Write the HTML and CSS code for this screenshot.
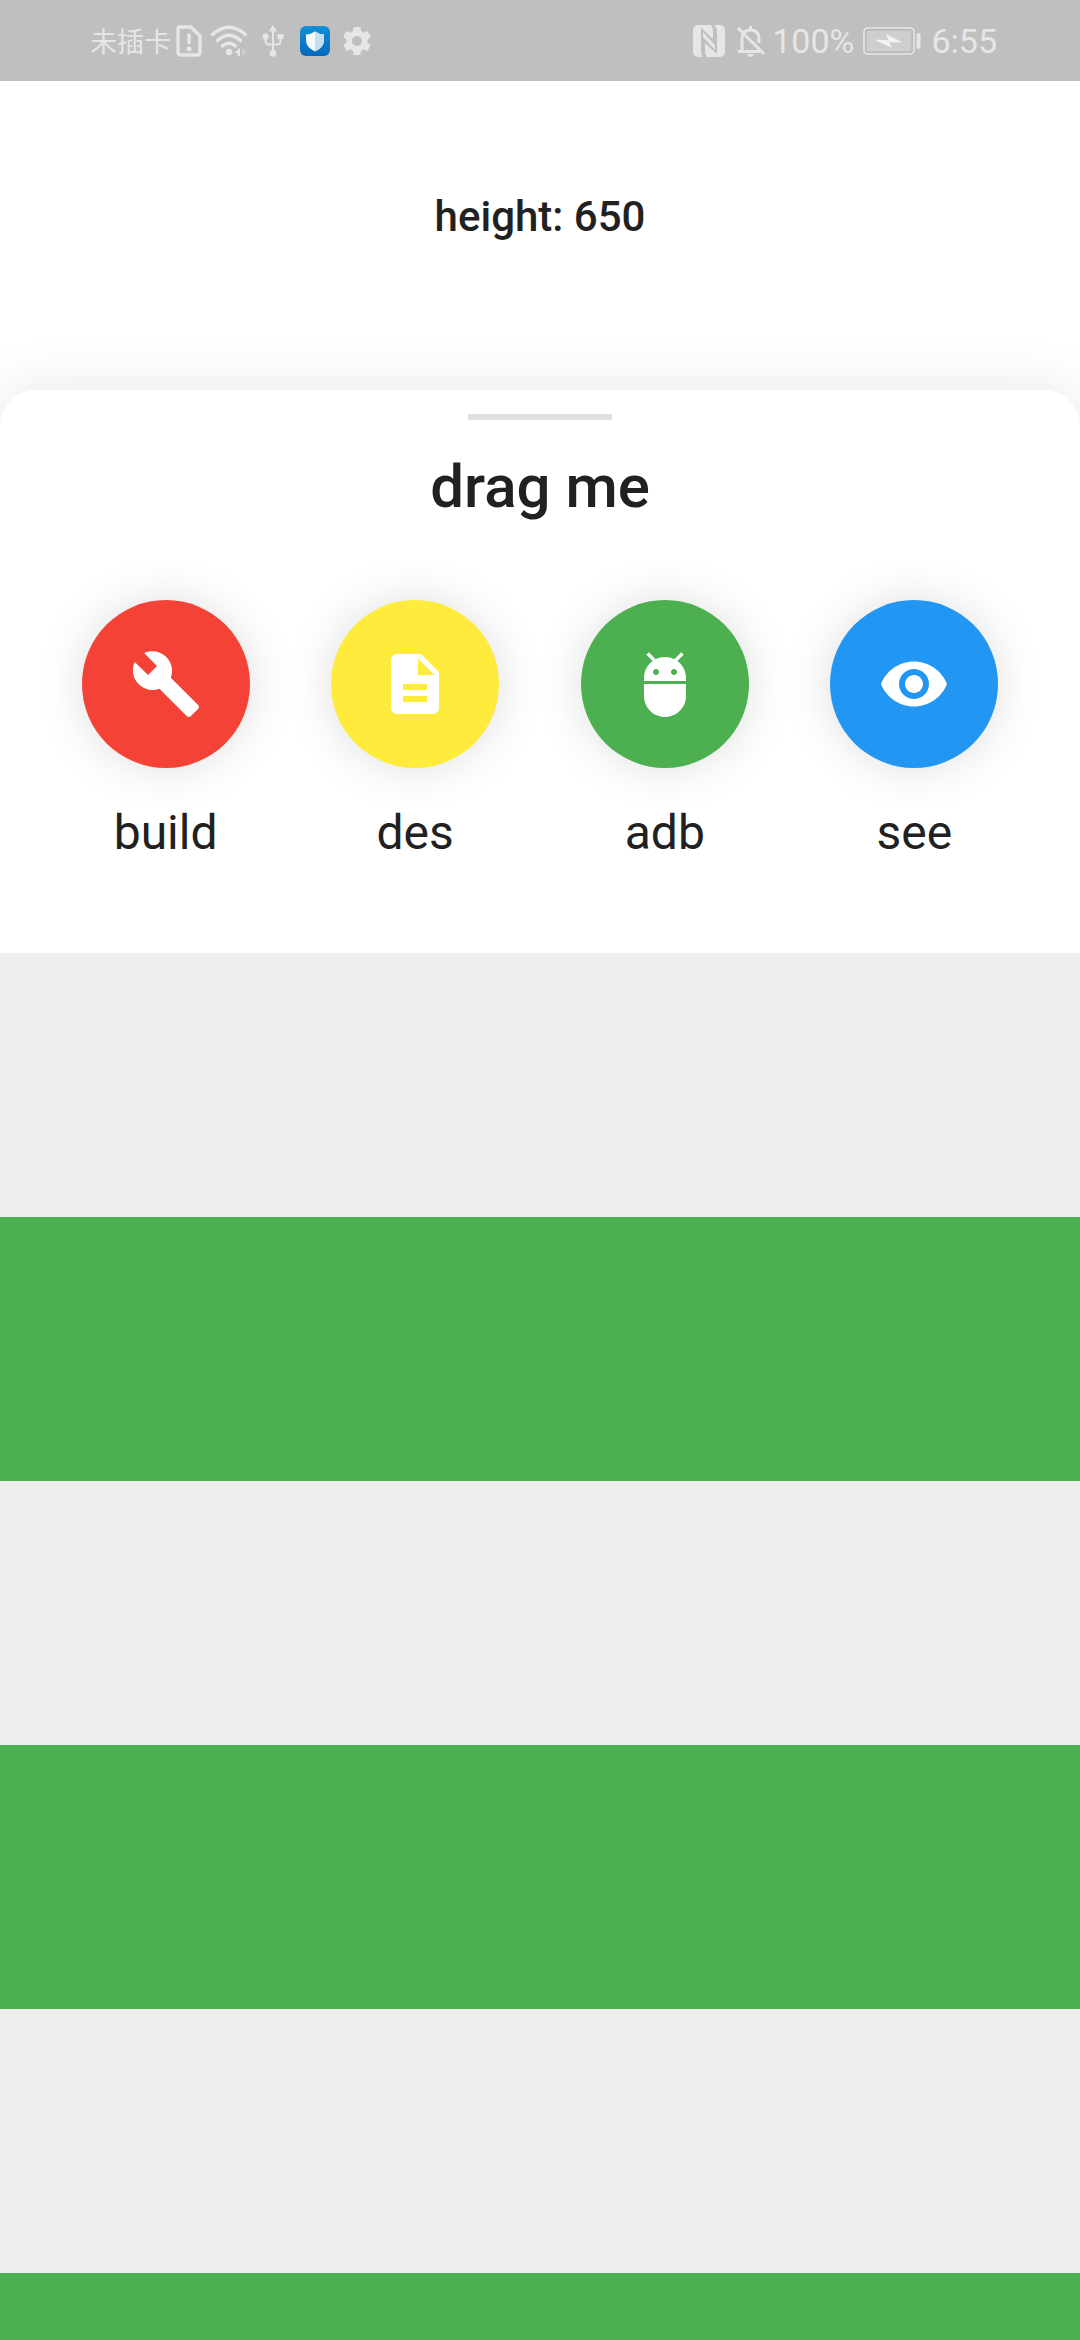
FILE: index.html
```html
<!DOCTYPE html>
<html lang="en">
<head>
<meta charset="utf-8">
<meta name="viewport" content="width=device-width">
<title>drag me</title>
<link rel="stylesheet" href="styles.css">
</head>
<body>
<div class="screen">
  <header class="status-bar">
    <div class="status-group">
      <span class="carrier" lang="zh">未插卡</span>
      <svg class="icon-sim" viewBox="0 0 26 32"><path d="M4 2H15L24 11V27Q24 30 21 30H5Q2 30 2 27V4Q2 2 4 2Z" fill="none" stroke="currentColor" stroke-width="3.4"/><path d="M11.200 8.500H14.800V19H11.200Z" fill="currentColor"/><circle cx="13" cy="24" r="2.500" fill="currentColor"/></svg>
      <svg class="icon-wifi" viewBox="0 0 38 32"><g fill="none" stroke="currentColor" stroke-width="3.400" stroke-linecap="round"><path d="M2.500 9.500Q19-5 35.500 9.500"/><path d="M7.500 15.500Q19 5 30.500 15.500"/><path d="M12.500 21Q19 15.500 25.500 21"/></g><circle cx="19" cy="27" r="3.200" fill="currentColor"/><path d="M30 23V31H27.500V28H24.500Z" fill="currentColor"/><path d="M32 23L37.500 26L32 31Z" fill="currentColor" opacity=".35"/></svg>
      <svg class="icon-usb" viewBox="0 0 22 34"><path d="M11 5V29M3.500 12V17Q3.500 20 6.500 20.500H15.500Q18.500 20 18.500 17V12" fill="none" stroke="currentColor" stroke-width="2"/><path d="M11 1L15 7.500H7Z" fill="currentColor"/><circle cx="3.500" cy="12.500" r="3" fill="currentColor"/><path d="M15.500 10H21.500V15H15.500Z" fill="currentColor"/><circle cx="11" cy="29.500" r="3.300" fill="currentColor"/></svg>
      <svg class="icon-shield" viewBox="0 0 30 30"><defs><linearGradient id="blue" x2="0" y2="1"><stop stop-color="#1191d8"/><stop offset="1" stop-color="#0567bd"/></linearGradient></defs><rect width="30" height="30" rx="6" fill="url(#blue)"/><path d="M15 5.500Q19.500 8.500 24 8.500V15Q23.500 21.500 15 25.500Q6.500 21.500 6 15V8.500Q10.500 8.500 15 5.500Z" fill="#f4faff"/><path d="M15 5.500Q19.500 8.500 24 8.500V15Q23.500 21.500 15 25.500Z" fill="#c4def2"/></svg>
      <svg class="icon-gear" viewBox="2 2 20 20"><path fill="currentColor" d="M19.43 12.98c.04-.32.07-.64.07-.98s-.03-.66-.07-.98l2.110-1.650c.19-.15.24-.42.12-.64l-2-3.460c-.12-.22-.39-.3-.61-.22l-2.490 1c-.52-.4-1.080-.73-1.690-.98l-.38-2.650C14.460 2.180 14.250 2 14 2h-4c-.25 0-.46.18-.49.42l-.38 2.650c-.61.25-1.170.59-1.690.98l-2.490-1c-.23-.09-.49 0-.61.22l-2 3.460c-.13.22-.07.49.12.64l2.110 1.650c-.04.32-.07.65-.07.98s.03.66.07.98l-2.110 1.650c-.19.15-.24.42-.12.64l2 3.460c.12.22.39.3.61.22l2.490-1c.52.4 1.080.73 1.690.98l.38 2.650c.03.24.24.42.49.42h4c.25 0 .46-.18.49-.42l.38-2.650c.61-.25 1.170-.59 1.690-.98l2.490 1c.23.09.49 0 .61-.22l2-3.460c.12-.22.07-.49-.12-.64l-2.110-1.650zM12 15.500c-1.930 0-3.500-1.570-3.500-3.500s1.570-3.500 3.500-3.500 3.500 1.570 3.500 3.500-1.570 3.500-3.500 3.500z"/></svg>
    </div>
    <div class="status-group">
      <svg class="icon-nfc" viewBox="0 0 32 32"><rect width="32" height="32" rx="5" fill="currentColor"/><path d="M6.500 1L20 14V7Q20 2 18 0H21Q24 2 24 8V29L12 18V25Q12 30 14 32H10Q8 30 8 26V3Z" fill="#bfbfbf"/><path d="M10 7L22 20V25L10 12Z" fill="currentColor"/></svg>
      <svg class="icon-bell" viewBox="0 0 30 32"><path d="M6 26V14Q6 5 14.500 5Q23 5 23 14V18M2 26.500H24M14.500 1V5M2 3L28 29" fill="none" stroke="currentColor" stroke-width="3"/><path d="M11 29H18Q17 32 14.500 32Q12 32 11 29Z" fill="currentColor"/></svg>
      <span class="status-text">100%</span>
      <svg class="icon-battery" viewBox="0 0 58 28"><rect x="1" y="1" width="50" height="26" rx="4" fill="none" stroke="currentColor" stroke-width="1.600"/><rect x="3" y="3" width="46" height="22" rx="2" fill="#cecece" stroke="#b4b4b4"/><rect x="53.500" y="6" width="4" height="16" rx="2" fill="currentColor"/><path d="M13 13L26 14L24 8L38 15L25.500 14.500L28 20Z" fill="#f2f2f2" stroke="#f2f2f2"/></svg>
      <span class="status-text">6:55</span>
    </div>
  </header>
  <p class="height-label">height: 650</p>
  <main class="sheet">
    <div class="handle"></div>
    <h1 class="title">drag me</h1>
    <nav class="actions">
      <button class="action"><span class="disc red"><svg viewBox="0 0 24 24"><path d="M22.700 19l-9.100-9.100c.9-2.300.4-5-1.500-6.900-2-2-5-2.400-7.400-1.300L9 6 6 9 1.600 4.700C.4 7.100.9 10.100 2.900 12.100c1.900 1.900 4.600 2.400 6.900 1.500l9.100 9.100c.4.4 1 .4 1.400 0l2.300-2.300c.5-.4.5-1.100.1-1.400z"/></svg></span><span class="caption">build</span></button>
      <button class="action"><span class="disc yellow"><svg viewBox="0 0 24 24"><path d="M14 2H6c-1.100 0-1.990.9-1.990 2L4 20c0 1.100.89 2 1.990 2H18c1.100 0 2-.9 2-2V8l-6-6zm2 16H8v-2h8v2zm0-4H8v-2h8v2zm-3-5V3.500L18.500 9H13z"/></svg></span><span class="caption">des</span></button>
      <button class="action"><span class="disc green"><svg viewBox="0 0 24 24"><path d="M5 16c0 3.870 3.130 7 7 7s7-3.130 7-7v-4H5v4zM16.120 4.370l2.100-2.100-.82-.83-2.300 2.310C14.160 3.280 13.120 3 12 3s-2.160.28-3.090.75L6.600 1.440l-.82.83 2.100 2.100C6.140 5.640 5 7.680 5 10v1h14v-1c0-2.320-1.140-4.360-2.880-5.630zM9 9c-.55 0-1-.45-1-1s.45-1 1-1 1 .45 1 1-.45 1-1 1zm6 0c-.55 0-1-.45-1-1s.45-1 1-1 1 .45 1 1-.45 1-1 1z"/></svg></span><span class="caption">adb</span></button>
      <button class="action"><span class="disc blue"><svg viewBox="0 0 24 24"><path d="M12 4.500C7 4.500 2.730 7.610 1 12c1.730 4.390 6 7.500 11 7.500s9.270-3.110 11-7.500c-1.730-4.390-6-7.500-11-7.500zM12 17c-2.760 0-5-2.240-5-5s2.240-5 5-5 5 2.240 5 5-2.240 5-5 5zm0-8c-1.660 0-3 1.340-3 3s1.340 3 3 3 3-1.340 3-3-1.340-3-3-3z"/></svg></span><span class="caption">see</span></button>
    </nav>
    <div class="rows">
      <div class="row"></div>
      <div class="row"></div>
      <div class="row"></div>
      <div class="row"></div>
      <div class="row"></div>
      <div class="row"></div>
    </div>
  </main>
</div>
</body>
</html>
```
FILE: styles.css
```css
* { box-sizing: border-box; }

body {
  margin: 0;
  background: #fff;
  color: #212121;
  font-family: Roboto, "Noto Sans CJK SC", sans-serif;
}

.screen {
  display: flex;
  flex-direction: column;
  height: 100vh;
  overflow: hidden;
}

.status-bar {
  flex: none;
  display: flex;
  justify-content: space-between;
  align-items: center;
  height: 81px;
  padding: 0 83px 0 90px;
  background: #bfbfbf;
  color: #e6e6e6;
}

.status-group { display: flex; align-items: center; }
.status-group svg { display: block; flex: none; }

.carrier {
  font-family: "Noto Sans CJK SC", sans-serif;
  font-weight: 400;
  font-size: 27px;
  line-height: 40px;
}

.status-text { font-size: 34px; line-height: 40px; }

.icon-sim { width: 26px; height: 32px; margin-left: 5px; }
.icon-wifi { width: 38px; height: 32px; margin-left: 8px; }
.icon-usb { width: 22px; height: 34px; margin-left: 14px; }
.icon-shield { width: 30px; height: 30px; margin-left: 16px; }
.icon-gear { width: 28px; height: 28px; margin-left: 13px; }
.icon-nfc { width: 32px; height: 32px; }
.icon-bell { width: 30px; height: 32px; margin: 0 6px 0 11px; }
.icon-battery { width: 58px; height: 28px; margin: 0 10px 0 9px; }

.height-label {
  flex: none;
  margin: 0;
  height: 309px;
  padding-top: 112px;
  font-weight: 500;
  font-size: 42px;
  line-height: 48px;
  text-align: center;
}

.sheet {
  flex: none;
  padding-top: 24px;
  border-radius: 36px 36px 0 0;
  background: #fff;
  box-shadow: 0 0 60px rgba(0, 0, 0, 0.1);
}

.handle {
  width: 144px;
  height: 6px;
  margin: 0 auto;
  background: #e0e0e0;
}

.title {
  margin: 31px 0 77px;
  font-weight: 500;
  font-size: 60px;
  line-height: 72px;
  text-align: center;
}

.actions {
  display: flex;
  justify-content: space-evenly;
  padding-bottom: 92px;
}

.action {
  display: flex;
  flex-direction: column;
  align-items: center;
  gap: 36px;
  padding: 0;
  border: 0;
  background: none;
  color: inherit;
  font: inherit;
}

.disc {
  display: flex;
  align-items: center;
  justify-content: center;
  width: 168px;
  height: 168px;
  border-radius: 50%;
  box-shadow: 0 0 48px rgba(0, 0, 0, 0.13);
}

.disc svg { width: 72px; height: 72px; fill: #fff; }

.red { background: #f44336; }
.yellow { background: #ffeb3b; }
.green { background: #4caf50; }
.blue { background: #2196f3; }

.caption { font-size: 48px; line-height: 57px; }

.row { height: 264px; background: #eee; }
.row:nth-child(even) { background: #4caf50; }
```
